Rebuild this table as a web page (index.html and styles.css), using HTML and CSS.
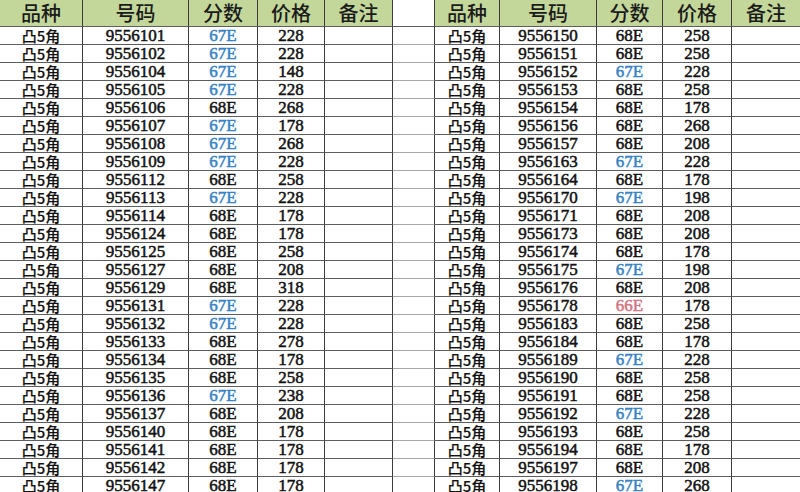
FILE: index.html
```html
<!DOCTYPE html>
<html lang="zh">
<head>
<meta charset="utf-8">
<title>凸5角</title>
<link rel="stylesheet" href="styles.css">
</head>
<body>
<table class="sheet">
<colgroup>
<col class="c-kind-l"><col class="c-num-l"><col class="c-score-l"><col class="c-price-l"><col class="c-note-l">
<col class="c-gap">
<col class="c-kind-r"><col class="c-num-r"><col class="c-score-r"><col class="c-price-r"><col class="c-note-r">
</colgroup>
<thead>
<tr><th>品种</th><th>号码</th><th>分数</th><th>价格</th><th>备注</th><th class="gap"></th><th>品种</th><th>号码</th><th>分数</th><th>价格</th><th>备注</th></tr>
</thead>
<tbody>
<tr><td class="k">凸5角</td><td>9556101</td><td class="b">67E</td><td>228</td><td></td><td class="gap"></td><td class="k">凸5角</td><td>9556150</td><td>68E</td><td>258</td><td></td></tr>
<tr><td class="k">凸5角</td><td>9556102</td><td class="b">67E</td><td>228</td><td></td><td class="gap"></td><td class="k">凸5角</td><td>9556151</td><td>68E</td><td>258</td><td></td></tr>
<tr><td class="k">凸5角</td><td>9556104</td><td class="b">67E</td><td>148</td><td></td><td class="gap"></td><td class="k">凸5角</td><td>9556152</td><td class="b">67E</td><td>228</td><td></td></tr>
<tr><td class="k">凸5角</td><td>9556105</td><td class="b">67E</td><td>228</td><td></td><td class="gap"></td><td class="k">凸5角</td><td>9556153</td><td>68E</td><td>258</td><td></td></tr>
<tr><td class="k">凸5角</td><td>9556106</td><td>68E</td><td>268</td><td></td><td class="gap"></td><td class="k">凸5角</td><td>9556154</td><td>68E</td><td>178</td><td></td></tr>
<tr><td class="k">凸5角</td><td>9556107</td><td class="b">67E</td><td>178</td><td></td><td class="gap"></td><td class="k">凸5角</td><td>9556156</td><td>68E</td><td>268</td><td></td></tr>
<tr><td class="k">凸5角</td><td>9556108</td><td class="b">67E</td><td>268</td><td></td><td class="gap"></td><td class="k">凸5角</td><td>9556157</td><td>68E</td><td>208</td><td></td></tr>
<tr><td class="k">凸5角</td><td>9556109</td><td class="b">67E</td><td>228</td><td></td><td class="gap"></td><td class="k">凸5角</td><td>9556163</td><td class="b">67E</td><td>228</td><td></td></tr>
<tr><td class="k">凸5角</td><td>9556112</td><td>68E</td><td>258</td><td></td><td class="gap"></td><td class="k">凸5角</td><td>9556164</td><td>68E</td><td>178</td><td></td></tr>
<tr><td class="k">凸5角</td><td>9556113</td><td class="b">67E</td><td>228</td><td></td><td class="gap"></td><td class="k">凸5角</td><td>9556170</td><td class="b">67E</td><td>198</td><td></td></tr>
<tr><td class="k">凸5角</td><td>9556114</td><td>68E</td><td>178</td><td></td><td class="gap"></td><td class="k">凸5角</td><td>9556171</td><td>68E</td><td>208</td><td></td></tr>
<tr><td class="k">凸5角</td><td>9556124</td><td>68E</td><td>178</td><td></td><td class="gap"></td><td class="k">凸5角</td><td>9556173</td><td>68E</td><td>208</td><td></td></tr>
<tr><td class="k">凸5角</td><td>9556125</td><td>68E</td><td>258</td><td></td><td class="gap"></td><td class="k">凸5角</td><td>9556174</td><td>68E</td><td>178</td><td></td></tr>
<tr><td class="k">凸5角</td><td>9556127</td><td>68E</td><td>208</td><td></td><td class="gap"></td><td class="k">凸5角</td><td>9556175</td><td class="b">67E</td><td>198</td><td></td></tr>
<tr><td class="k">凸5角</td><td>9556129</td><td>68E</td><td>318</td><td></td><td class="gap"></td><td class="k">凸5角</td><td>9556176</td><td>68E</td><td>208</td><td></td></tr>
<tr><td class="k">凸5角</td><td>9556131</td><td class="b">67E</td><td>228</td><td></td><td class="gap"></td><td class="k">凸5角</td><td>9556178</td><td class="r">66E</td><td>178</td><td></td></tr>
<tr><td class="k">凸5角</td><td>9556132</td><td class="b">67E</td><td>228</td><td></td><td class="gap"></td><td class="k">凸5角</td><td>9556183</td><td>68E</td><td>258</td><td></td></tr>
<tr><td class="k">凸5角</td><td>9556133</td><td>68E</td><td>278</td><td></td><td class="gap"></td><td class="k">凸5角</td><td>9556184</td><td>68E</td><td>178</td><td></td></tr>
<tr><td class="k">凸5角</td><td>9556134</td><td>68E</td><td>178</td><td></td><td class="gap"></td><td class="k">凸5角</td><td>9556189</td><td class="b">67E</td><td>228</td><td></td></tr>
<tr><td class="k">凸5角</td><td>9556135</td><td>68E</td><td>258</td><td></td><td class="gap"></td><td class="k">凸5角</td><td>9556190</td><td>68E</td><td>258</td><td></td></tr>
<tr><td class="k">凸5角</td><td>9556136</td><td class="b">67E</td><td>238</td><td></td><td class="gap"></td><td class="k">凸5角</td><td>9556191</td><td>68E</td><td>258</td><td></td></tr>
<tr><td class="k">凸5角</td><td>9556137</td><td>68E</td><td>208</td><td></td><td class="gap"></td><td class="k">凸5角</td><td>9556192</td><td class="b">67E</td><td>228</td><td></td></tr>
<tr><td class="k">凸5角</td><td>9556140</td><td>68E</td><td>178</td><td></td><td class="gap"></td><td class="k">凸5角</td><td>9556193</td><td>68E</td><td>258</td><td></td></tr>
<tr><td class="k">凸5角</td><td>9556141</td><td>68E</td><td>178</td><td></td><td class="gap"></td><td class="k">凸5角</td><td>9556194</td><td>68E</td><td>178</td><td></td></tr>
<tr><td class="k">凸5角</td><td>9556142</td><td>68E</td><td>178</td><td></td><td class="gap"></td><td class="k">凸5角</td><td>9556197</td><td>68E</td><td>208</td><td></td></tr>
<tr><td class="k">凸5角</td><td>9556147</td><td>68E</td><td>178</td><td></td><td class="gap"></td><td class="k">凸5角</td><td>9556198</td><td class="b">67E</td><td>268</td><td></td></tr>
</tbody>
</table>
</body>
</html>
```

FILE: styles.css
```css
html, body {
  margin: 0;
  padding: 0;
  background: #ffffff;
  overflow: hidden;
}

.sheet {
  border-collapse: separate;
  border-spacing: 0;
  table-layout: fixed;
  width: 801px;
}

.c-kind-l { width: 83px; }
.c-num-l { width: 106px; }
.c-score-l { width: 69px; }
.c-price-l { width: 67px; }
.c-note-l { width: 68px; }
.c-gap { width: 42px; }
.c-kind-r { width: 65px; }
.c-num-r { width: 97px; }
.c-score-r { width: 66px; }
.c-price-r { width: 69px; }
.c-note-r { width: 69px; }

.sheet th,
.sheet td {
  box-sizing: border-box;
  padding: 0;
  border-right: 1px solid #3c3c3c;
  border-bottom: 1px solid #5e5e5e;
  text-align: center;
  vertical-align: middle;
  white-space: nowrap;
}

.sheet th {
  height: 27px;
  background: #c4d79b;
  color: #1b1b1b;
  font: 500 20px/24px "Noto Sans CJK SC", sans-serif;
}

.sheet th.gap {
  background: #ffffff;
}

.sheet td {
  height: 18px;
  color: #111111;
  font: 17px/16px "Liberation Serif", "Noto Sans CJK SC", serif;
  -webkit-text-stroke: 0.5px #111111;
}

.sheet td.gap {
  border-bottom-color: #a8a8a8;
}

.sheet td.k {
  font: 500 15px/16px "Noto Sans CJK SC", sans-serif;
  color: #111111;
  -webkit-text-stroke: 0.15px #111111;
}

.sheet td.b {
  color: #3582c4;
  -webkit-text-stroke-color: #3582c4;
}

.sheet td.r {
  color: #d27482;
  -webkit-text-stroke-color: #d27482;
}
```
